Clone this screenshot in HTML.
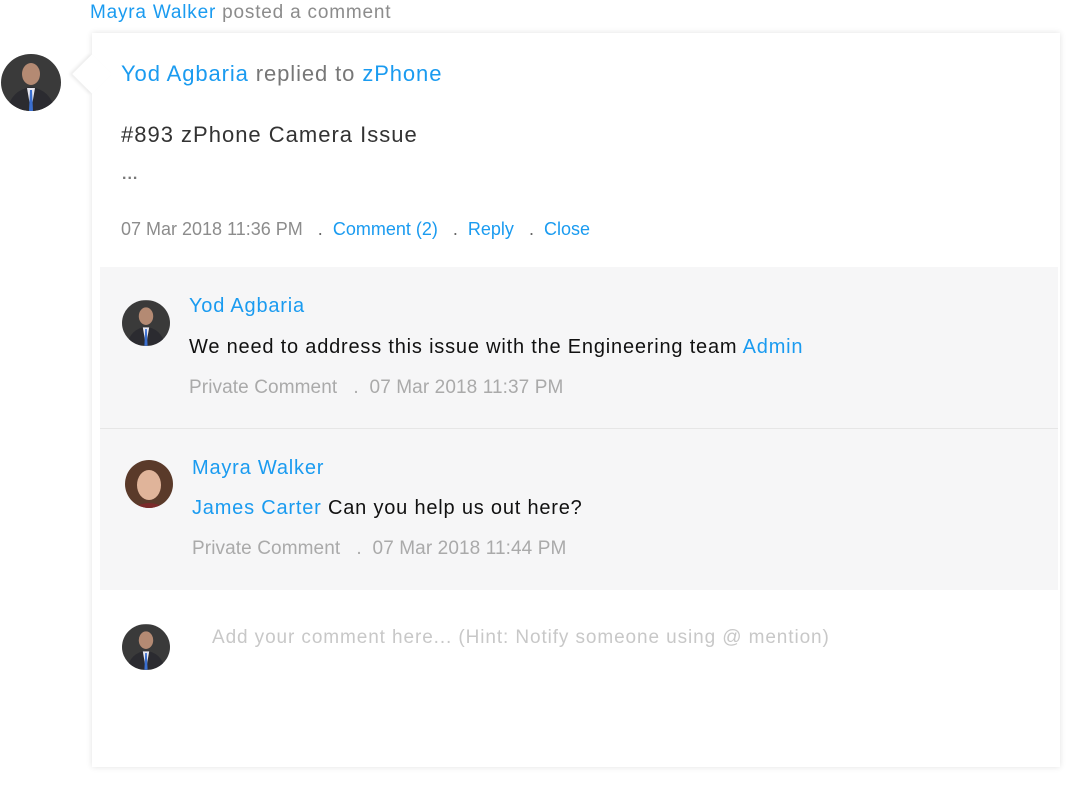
<!DOCTYPE html>
<html><head><meta charset="utf-8"><style>
*{margin:0;padding:0;box-sizing:border-box}
body{width:1088px;height:793px;background:#fff;font-family:"Liberation Sans",sans-serif;position:relative;overflow:hidden}
.a{position:absolute;white-space:nowrap}
.b{color:#1a9bf0}
.g{color:#8c8c8c}
.card{position:absolute;left:92px;top:33px;width:968px;height:734px;background:#fff;box-shadow:0 0 6px rgba(0,0,0,.12)}
.gray{position:absolute;left:100px;width:958px;background:#f6f6f7}
.av{position:absolute;border-radius:50%;overflow:hidden}
</style></head><body>
<div class="a" style="left:90px;top:2px;font-size:19px;letter-spacing:0.8px"><span class="b">Mayra Walker</span> <span class="g">posted a comment</span></div>
<div class="card"></div>
<div class="a" style="left:78px;top:60px;width:28px;height:28px;background:#fff;transform:rotate(45deg);box-shadow:-2px 2px 3px rgba(0,0,0,.08)"></div>
<div class="gray" style="top:267px;height:161px"></div>
<div class="a" style="left:100px;top:428px;width:958px;height:1px;background:#e6e6e6"></div>
<div class="gray" style="top:429px;height:161px"></div>

<svg class="av" style="left:1px;top:54px" width="60" height="57" viewBox="0 0 60 57"><rect width="60" height="57" fill="#3a3a3a"/><ellipse cx="30" cy="20" rx="9" ry="11" fill="#b48a73"/><path d="M6 57 Q10 36 30 33 Q50 36 54 57Z" fill="#2b2b30"/><path d="M26 34 L30 57 L34 34Z" fill="#e8e8f0"/><path d="M29 36 L31 36 L32 57 L28 57Z" fill="#3a6fd0"/></svg>
<div class="a" style="left:121px;top:61px;font-size:22px;letter-spacing:0.9px"><span class="b">Yod Agbaria</span> <span style="color:#777">replied to</span> <span class="b">zPhone</span></div>
<div class="a" style="left:121px;top:122px;font-size:22px;color:#333;letter-spacing:1px">#893 zPhone Camera Issue</div>
<div class="a" style="left:122px;top:166px;font-size:16px;color:#777;font-weight:bold;letter-spacing:1px">...</div>
<div class="a" style="left:121px;top:219px;font-size:18px"><span class="g">07 Mar 2018 11:36 PM</span> &nbsp; <span style="color:#666">.</span> &nbsp;<span class="b">Comment (2)</span> &nbsp; <span style="color:#666">.</span> &nbsp;<span class="b">Reply</span> &nbsp; <span style="color:#666">.</span> &nbsp;<span class="b">Close</span></div>

<svg class="av" style="left:122px;top:300px" width="48" height="46" viewBox="0 0 60 57"><rect width="60" height="57" fill="#3a3a3a"/><ellipse cx="30" cy="20" rx="9" ry="11" fill="#b48a73"/><path d="M6 57 Q10 36 30 33 Q50 36 54 57Z" fill="#2b2b30"/><path d="M26 34 L30 57 L34 34Z" fill="#e8e8f0"/><path d="M29 36 L31 36 L32 57 L28 57Z" fill="#3a6fd0"/></svg>
<div class="a b" style="left:189px;top:295px;font-size:20px;letter-spacing:0.8px">Yod Agbaria</div>
<div class="a" style="left:189px;top:336px;font-size:20px;color:#111;letter-spacing:0.8px">We need to address this issue with the Engineering team <span class="b">Admin</span></div>
<div class="a" style="left:189px;top:377px;font-size:19px;color:#aaa;letter-spacing:0.1px">Private Comment &nbsp; . &nbsp;07 Mar 2018 11:37 PM</div>

<svg class="av" style="left:125px;top:460px" width="48" height="48" viewBox="0 0 48 48"><rect width="48" height="48" fill="#5a3a2a"/><ellipse cx="24" cy="25" rx="12" ry="15" fill="#e0b49a"/><path d="M8 48 Q24 38 40 48Z" fill="#7a2a2a"/></svg>
<div class="a b" style="left:192px;top:457px;font-size:20px;letter-spacing:0.8px">Mayra Walker</div>
<div class="a" style="left:192px;top:497px;font-size:20px;color:#111;letter-spacing:0.8px"><span class="b">James Carter</span> Can you help us out here?</div>
<div class="a" style="left:192px;top:538px;font-size:19px;color:#aaa;letter-spacing:0.1px">Private Comment &nbsp; . &nbsp;07 Mar 2018 11:44 PM</div>

<svg class="av" style="left:122px;top:624px" width="48" height="46" viewBox="0 0 60 57"><rect width="60" height="57" fill="#3a3a3a"/><ellipse cx="30" cy="20" rx="9" ry="11" fill="#b48a73"/><path d="M6 57 Q10 36 30 33 Q50 36 54 57Z" fill="#2b2b30"/><path d="M26 34 L30 57 L34 34Z" fill="#e8e8f0"/><path d="M29 36 L31 36 L32 57 L28 57Z" fill="#3a6fd0"/></svg>
<div class="a" style="left:212px;top:627px;font-size:19px;color:#c8c8c8;letter-spacing:0.9px">Add your comment here... (Hint: Notify someone using @ mention)</div>
</body></html>
